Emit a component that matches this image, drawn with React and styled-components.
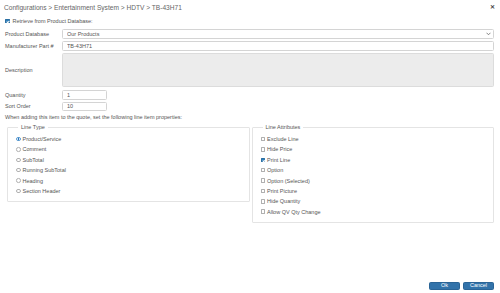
import React from 'react';
import styled, { createGlobalStyle } from 'styled-components';

const GlobalStyle = createGlobalStyle`
html, body {
    margin: 0;
    padding: 0;
    background: #fff;
}
body {
    font-family: "Liberation Sans", Arial, sans-serif;
    color: #555;
}
* { box-sizing: border-box; }
`

const lineTypes = ['Product/Service', 'Comment', 'SubTotal', 'Running SubTotal', 'Heading', 'Section Header'];
const attributes = [
    { label: 'Exclude Line' },
    { label: 'Hide Price' },
    { label: 'Print Line', checked: true },
    { label: 'Option' },
    { label: 'Option (Selected)' },
    { label: 'Print Picture' },
    { label: 'Hide Quantity' },
    { label: 'Allow QV Qty Change' },
];

function App() {
    return (
        <Page>
            <GlobalStyle />
            <Header>
                <Title>Configurations &gt; Entertainment System &gt; HDTV &gt; TB-43H71</Title>
                <Close>✕</Close>
            </Header>
            <Form>
                <Retrieve>
                    <Check type="checkbox" defaultChecked />
                    <span>Retrieve from Product Database:</span>
                </Retrieve>
                <Row>
                    <Label>Product Database</Label>
                    <SelectWrap>
                        <Select defaultValue="our">
                            <option value="our">Our Products</option>
                        </Select>
                        <Chevron width="5" height="4" viewBox="0 0 10 8">
                            <path d="M1 1.5 L5 5.5 L9 1.5" fill="none" stroke="#666" strokeWidth="1.6" />
                        </Chevron>
                    </SelectWrap>
                </Row>
                <Row>
                    <Label>Manufacturer Part #</Label>
                    <Input defaultValue="TB-43H71" />
                </Row>
                <Row>
                    <Label>Description</Label>
                    <TextArea disabled />
                </Row>
                <Row $gap={3}>
                    <Label>Quantity</Label>
                    <Input $small defaultValue="1" />
                </Row>
                <Row>
                    <Label>Sort Order</Label>
                    <Input $small defaultValue="10" />
                </Row>
                <Note>When adding this item to the quote, set the following line item properties:</Note>
                <Groups>
                    <Group>
                        <Legend>Line Type</Legend>
                        {lineTypes.map((t, i) => (
                            <Option key={t}>
                                <Radio type="radio" name="linetype" defaultChecked={i === 0} />
                                <span>{t}</span>
                            </Option>
                        ))}
                    </Group>
                    <Group>
                        <Legend>Line Attributes</Legend>
                        {attributes.map(a => (
                            <Option key={a.label}>
                                <Check type="checkbox" defaultChecked={a.checked} />
                                <span>{a.label}</span>
                            </Option>
                        ))}
                    </Group>
                </Groups>
            </Form>
            <Footer>
                <Button>Ok</Button>
                <Button>Cancel</Button>
            </Footer>
        </Page>
    )
}

export default App

const Page = styled.div`
min-height: 100vh;
display: flex;
flex-direction: column;
`
const Header = styled.div`
height: 14px;
display: flex;
align-items: center;
justify-content: space-between;
padding: 0 5px 0 4px;
`
const Title = styled.div`
font-size: 6.6px;
color: #666;
`
const Close = styled.div`
font-size: 6px;
font-weight: bold;
color: #444;
line-height: 1;
`
const Form = styled.div`
display: flex;
flex-direction: column;
padding: 0 6px 0 5px;
`
const Retrieve = styled.label`
display: flex;
align-items: center;
gap: 3px;
height: 10px;
margin-top: 2px;
margin-bottom: 3px;
font-size: 5.5px;
color: #555;
`
const Row = styled.div`
display: grid;
grid-template-columns: 57px 1fr;
align-items: center;
margin-bottom: 2px;
margin-top: ${p => (p.$gap ? p.$gap - 2 : 0)}px;
`
const Label = styled.div`
font-size: 5.5px;
color: #555;
`
const fieldBase = `
height: 10px;
border: 0.6px solid #d4d4d4;
border-radius: 1.5px;
font-family: "Liberation Sans", Arial, sans-serif;
font-size: 5.5px;
color: #555;
padding: 0 4px;
background: #fff;
outline: none;
`
const SelectWrap = styled.div`
position: relative;
display: flex;
`
const Select = styled.select`
${fieldBase}
width: 100%;
appearance: none;
`
const Chevron = styled.svg`
position: absolute;
right: 3px;
top: 3px;
`
const Input = styled.input`
${fieldBase}
width: ${p => (p.$small ? '45px' : '100%')};
height: ${p => (p.$small ? '9.5px' : '10px')};
`
const TextArea = styled.textarea`
${fieldBase}
height: 34px;
width: 100%;
resize: none;
background: #ececec;
border-color: #dcdcdc;
`
const Note = styled.div`
font-size: 5.5px;
color: #555;
line-height: 7px;
margin-top: 1px;
`
const Groups = styled.div`
display: grid;
grid-template-columns: 1fr 1fr;
gap: 2px;
align-items: start;
padding-left: 2px;
margin-top: 2.5px;
`
const Group = styled.fieldset`
margin: 0;
border: 0.8px solid #e4e4e4;
border-radius: 1px;
padding: 3.3px 8px 5px 8px;
display: flex;
flex-direction: column;
`
const Legend = styled.legend`
font-size: 5.5px;
line-height: 7px;
color: #555;
padding: 0 3px;
margin-left: 2px;
`
const Option = styled.label`
display: flex;
align-items: center;
gap: 2px;
height: 10.4px;
font-size: 5.5px;
color: #555;
`
const Check = styled.input`
appearance: none;
margin: 0;
width: 4.5px;
height: 4.5px;
border: 0.6px solid #b0b0b0;
border-radius: 0.6px;
background: #fff;
position: relative;
&:checked {
    background: #2f7fba;
    border-color: #2a6fa3;
}
&:checked::after {
    content: '';
    position: absolute;
    left: 1.1px;
    top: 0.1px;
    width: 1px;
    height: 2.2px;
    border: solid #fff;
    border-width: 0 0.7px 0.7px 0;
    transform: rotate(45deg);
}
`
const Radio = styled.input`
appearance: none;
margin: 0;
width: 4.5px;
height: 4.5px;
border: 0.6px solid #b0b0b0;
border-radius: 50%;
background: #fff;
&:checked {
    border-color: #5a9ad0;
    background: radial-gradient(circle, #2a78c0 0 45%, #fff 55%);
}
`
const Footer = styled.div`
margin-top: auto;
display: flex;
justify-content: flex-end;
gap: 3px;
padding: 0 6px 3px 0;
`
const Button = styled.button`
height: 8.5px;
width: 31px;
padding: 0;
border: 0.6px solid #2a6496;
border-radius: 1.5px;
background: #3273aa;
color: #fff;
font-family: "Liberation Sans", Arial, sans-serif;
font-size: 5.5px;
line-height: 1;
`
